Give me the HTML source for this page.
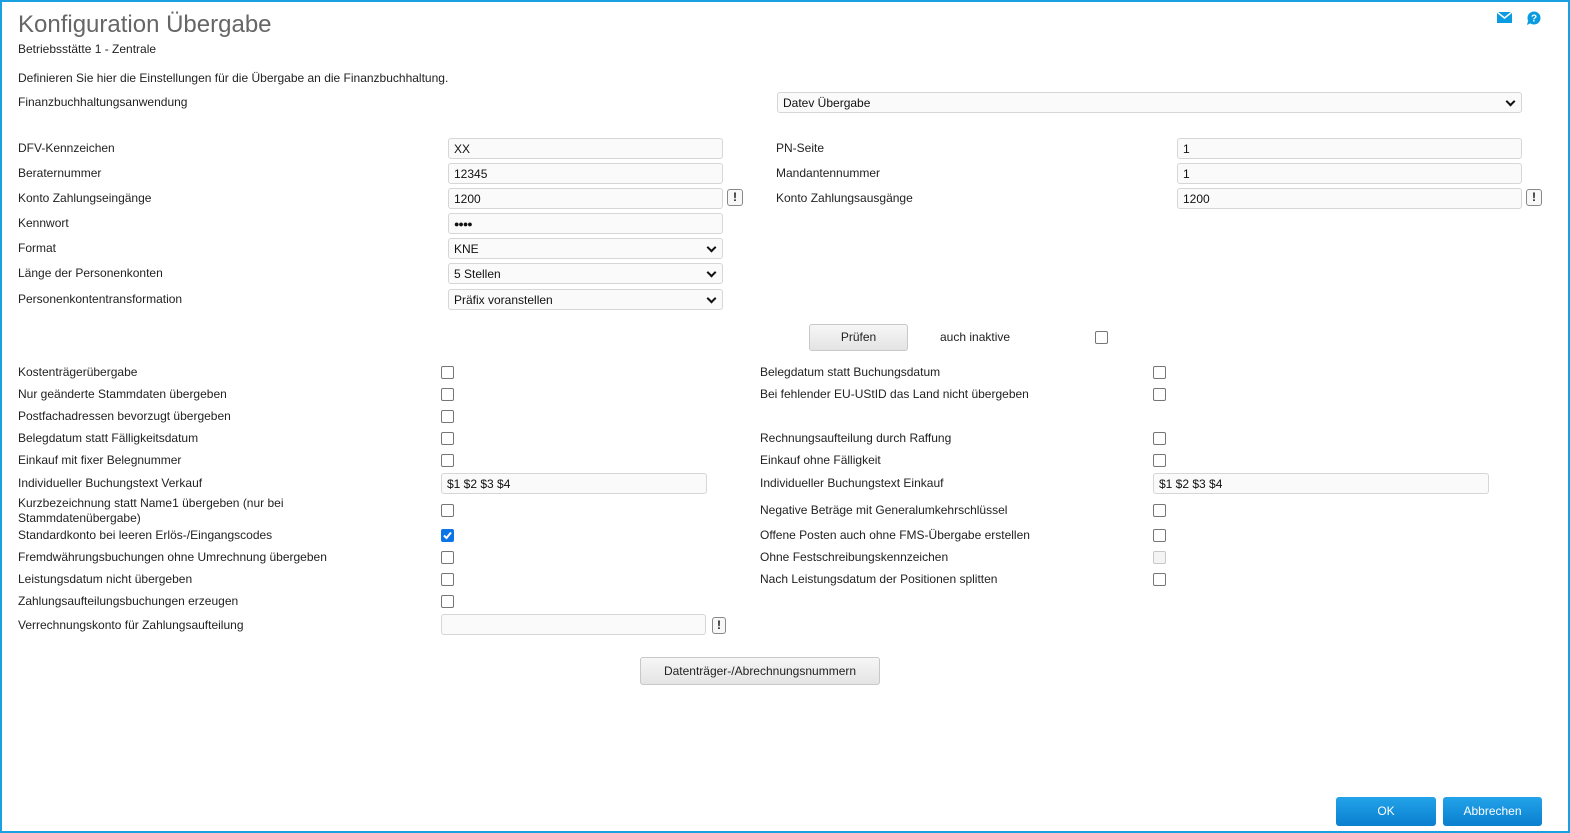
<!DOCTYPE html>
<html><head><meta charset="utf-8"><style>
*{box-sizing:border-box;margin:0;padding:0}
body{width:1570px;height:833px;position:relative;overflow:hidden;background:#fff;font-family:"Liberation Sans",Arial,sans-serif;font-size:12px;color:#222}
.frame{position:absolute;left:0;top:0;width:1570px;height:833px;border:2px solid #1a9fe0;border-top-width:2px}
.a{position:absolute;white-space:nowrap;line-height:16px}
.in{position:absolute;height:21px;border:1px solid #d6d6d6;border-radius:3px;background:#fafafa;padding-left:5px;line-height:20px;font-size:12px;color:#111;margin-left:1px}
.sel::after{content:"";position:absolute;right:7px;top:5px;width:5px;height:5px;border-right:2px solid #111;border-bottom:2px solid #111;transform:rotate(45deg)}
.ex{position:absolute;width:16px;height:17px;border:1px solid #888;border-radius:3px;background:#f8f8f8;font-weight:bold;text-align:center;line-height:15px;font-size:12px;margin-left:1px}
.cb{position:absolute;width:13px;height:13px;border:1px solid #767676;border-radius:2px;background:#fff;margin-left:1px}
.btn{position:absolute;border:1px solid #c8c8c8;border-radius:3px;background:linear-gradient(#f6f6f6,#e4e4e4);text-align:center;font-size:12px;margin-left:1px}
.blue{position:absolute;border-radius:3px;background:linear-gradient(#22a3e8,#0a7fcf);color:#fff;text-align:center;font-size:12px;line-height:28px;margin-left:1px}
</style></head><body>
<div class="frame"></div>
<div class="a" style="left:18px;top:11px;font-size:24px;line-height:28px;color:#666">Konfiguration Übergabe</div>
<div class="a" style="left:18px;top:41px">Betriebsstätte 1 - Zentrale</div>
<svg style="position:absolute;left:1497px;top:12px" width="15" height="11" viewBox="0 0 15 11"><rect width="15" height="11" fill="#0a9be0"/><path d="M0 0 L7.5 6 L15 0" stroke="#fff" stroke-width="1.5" fill="none"/></svg>
<svg style="position:absolute;left:1526px;top:11px" width="15" height="15" viewBox="0 0 15 15"><circle cx="8" cy="7" r="6.5" fill="#0a9be0"/><path d="M2 10 L1 14 L5 12Z" fill="#0a9be0"/><text x="8" y="10.5" font-size="10" font-weight="bold" fill="#fff" text-anchor="middle" font-family="Liberation Sans">?</text></svg>
<div class="a" style="left:18px;top:70px">Definieren Sie hier die Einstellungen für die Übergabe an die Finanzbuchhaltung.</div>
<div class="a" style="left:18px;top:94px">Finanzbuchhaltungsanwendung</div>
<div class="in sel" style="left:776px;top:92px;width:745px">Datev Übergabe</div>

<div class="a" style="left:18px;top:140px">DFV-Kennzeichen</div>
<div class="in" style="left:447px;top:138px;width:275px">XX</div>
<div class="a" style="left:776px;top:140px">PN-Seite</div>
<div class="in" style="left:1176px;top:138px;width:345px">1</div>

<div class="a" style="left:18px;top:165px">Beraternummer</div>
<div class="in" style="left:447px;top:163px;width:275px">12345</div>
<div class="a" style="left:776px;top:165px">Mandantennummer</div>
<div class="in" style="left:1176px;top:163px;width:345px">1</div>

<div class="a" style="left:18px;top:190px">Konto Zahlungseingänge</div>
<div class="in" style="left:447px;top:188px;width:275px">1200</div>
<div class="ex" style="left:726px;top:189px">!</div>
<div class="a" style="left:776px;top:190px">Konto Zahlungsausgänge</div>
<div class="in" style="left:1176px;top:188px;width:345px">1200</div>
<div class="ex" style="left:1525px;top:189px">!</div>

<div class="a" style="left:18px;top:215px">Kennwort</div>
<div class="in" style="left:447px;top:213px;width:275px;font-size:9px;letter-spacing:-1px">●●●●</div>
<div class="a" style="left:18px;top:240px">Format</div>
<div class="in sel" style="left:447px;top:238px;width:275px">KNE</div>
<div class="a" style="left:18px;top:265px">Länge der Personenkonten</div>
<div class="in sel" style="left:447px;top:263px;width:275px">5 Stellen</div>
<div class="a" style="left:18px;top:291px">Personenkontentransformation</div>
<div class="in sel" style="left:447px;top:289px;width:275px">Präfix voranstellen</div>

<div class="btn" style="left:808px;top:324px;width:99px;height:27px;line-height:25px">Prüfen</div>
<div class="a" style="left:940px;top:329px">auch inaktive</div>
<div class="cb" style="left:1094px;top:331px"></div>

<div class="a" style="left:18px;top:364px">Kostenträgerübergabe</div><div class="cb" style="left:440px;top:366px"></div>
<div class="a" style="left:760px;top:364px">Belegdatum statt Buchungsdatum</div><div class="cb" style="left:1152px;top:366px"></div>
<div class="a" style="left:18px;top:386px">Nur geänderte Stammdaten übergeben</div><div class="cb" style="left:440px;top:388px"></div>
<div class="a" style="left:760px;top:386px">Bei fehlender EU-UStID das Land nicht übergeben</div><div class="cb" style="left:1152px;top:388px"></div>
<div class="a" style="left:18px;top:408px">Postfachadressen bevorzugt übergeben</div><div class="cb" style="left:440px;top:410px"></div>
<div class="a" style="left:18px;top:430px">Belegdatum statt Fälligkeitsdatum</div><div class="cb" style="left:440px;top:432px"></div>
<div class="a" style="left:760px;top:430px">Rechnungsaufteilung durch Raffung</div><div class="cb" style="left:1152px;top:432px"></div>
<div class="a" style="left:18px;top:452px">Einkauf mit fixer Belegnummer</div><div class="cb" style="left:440px;top:454px"></div>
<div class="a" style="left:760px;top:452px">Einkauf ohne Fälligkeit</div><div class="cb" style="left:1152px;top:454px"></div>
<div class="a" style="left:18px;top:475px">Individueller Buchungstext Verkauf</div>
<div class="in" style="left:440px;top:473px;width:266px">$1 $2 $3 $4</div>
<div class="a" style="left:760px;top:475px">Individueller Buchungstext Einkauf</div>
<div class="in" style="left:1152px;top:473px;width:336px">$1 $2 $3 $4</div>
<div class="a" style="left:18px;top:496px;line-height:15px">Kurzbezeichnung statt Name1 übergeben (nur bei<br>Stammdatenübergabe)</div><div class="cb" style="left:440px;top:504px"></div>
<div class="a" style="left:760px;top:502px">Negative Beträge mit Generalumkehrschlüssel</div><div class="cb" style="left:1152px;top:504px"></div>
<div class="a" style="left:18px;top:527px">Standardkonto bei leeren Erlös-/Eingangscodes</div>
<div class="cb" style="left:440px;top:529px;background:#0b75e8;border-color:#0b75e8"><svg width="11" height="11" viewBox="0 0 11 11" style="position:absolute;left:0;top:0"><path d="M2 5.5 L4.5 8 L9 2.5" stroke="#fff" stroke-width="2" fill="none"/></svg></div>
<div class="a" style="left:760px;top:527px">Offene Posten auch ohne FMS-Übergabe erstellen</div><div class="cb" style="left:1152px;top:529px"></div>
<div class="a" style="left:18px;top:549px">Fremdwährungsbuchungen ohne Umrechnung übergeben</div><div class="cb" style="left:440px;top:551px"></div>
<div class="a" style="left:760px;top:549px">Ohne Festschreibungskennzeichen</div><div class="cb" style="left:1152px;top:551px;border-color:#c8c8c8;background:#f4f4f4"></div>
<div class="a" style="left:18px;top:571px">Leistungsdatum nicht übergeben</div><div class="cb" style="left:440px;top:573px"></div>
<div class="a" style="left:760px;top:571px">Nach Leistungsdatum der Positionen splitten</div><div class="cb" style="left:1152px;top:573px"></div>
<div class="a" style="left:18px;top:593px">Zahlungsaufteilungsbuchungen erzeugen</div><div class="cb" style="left:440px;top:595px"></div>
<div class="a" style="left:18px;top:617px">Verrechnungskonto für Zahlungsaufteilung</div>
<div class="in" style="left:440px;top:614px;width:265px"></div>
<div class="ex" style="left:711px;top:617px;width:14px">!</div>

<div class="btn" style="left:639px;top:657px;width:240px;height:28px;line-height:26px">Datenträger-/Abrechnungsnummern</div>
<div class="blue" style="left:1335px;top:797px;width:100px;height:29px">OK</div>
<div class="blue" style="left:1442px;top:797px;width:99px;height:29px">Abbrechen</div>
</body></html>
